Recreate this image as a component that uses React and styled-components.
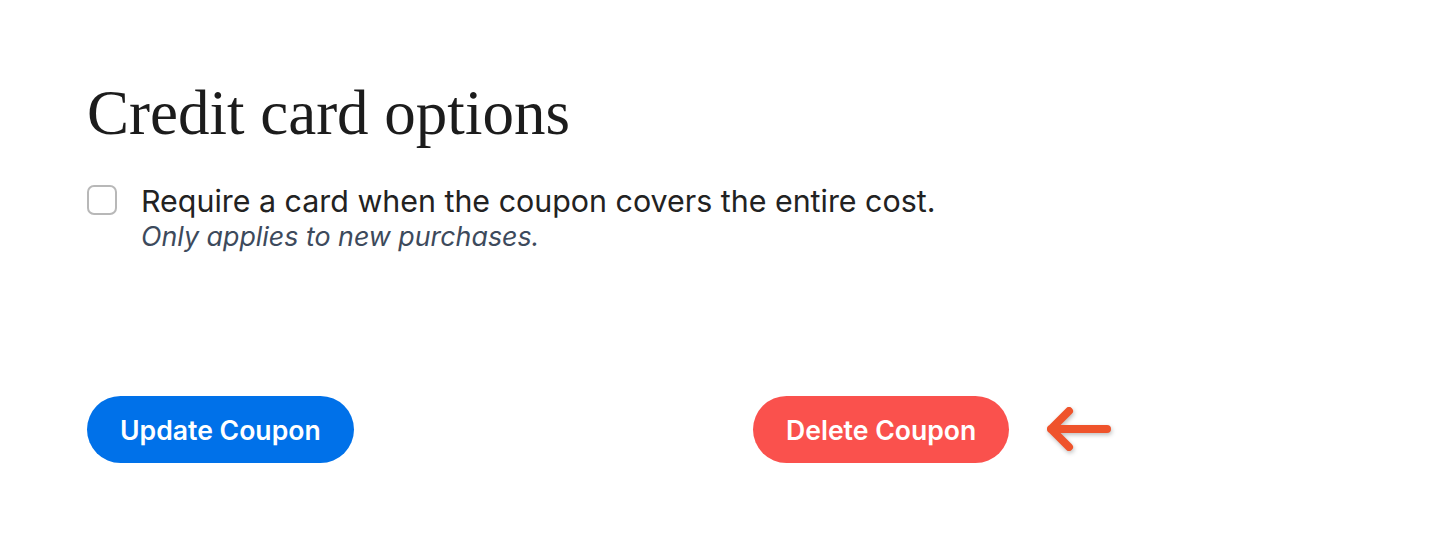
import React from 'react'
import styled, { createGlobalStyle } from 'styled-components'

const GlobalStyle = createGlobalStyle`
    html, body {
        margin: 0;
        padding: 0;
        background: #ffffff;
    }
    body {
        font-family: Inter, "Noto Sans", sans-serif;
        -webkit-font-smoothing: antialiased;
    }
`

const Page = styled.section`
    padding: 73px 87px 0 87px;
    height: 541px;
    box-sizing: border-box;
`

const Heading = styled.h2`
    margin: 0;
    font-family: "Liberation Serif", "DejaVu Serif", serif;
    font-weight: 400;
    font-size: 63px;
    line-height: 80px;
    color: #1c1c1c;
`

const OptionRow = styled.label`
    display: flex;
    align-items: flex-start;
    gap: 24px;
    margin-top: 30px;
    cursor: pointer;
`

const Box = styled.input`
    appearance: none;
    margin: 2px 0 0 0;
    flex: none;
    width: 30px;
    height: 30px;
    border: 2px solid #b8b8b8;
    border-radius: 7px;
    background: #fff;
    box-sizing: border-box;
`

const OptionText = styled.div`
    display: flex;
    flex-direction: column;
`

const Label = styled.span`
    font-size: 30.4px;
    line-height: 36px;
    color: #222222;
`

const Hint = styled.span`
    margin-top: 1px;
    font-size: 26.8px;
    line-height: 32px;
    font-style: italic;
    color: #3d4a5c;
`

const Actions = styled.div`
    display: grid;
    grid-template-columns: 666px auto;
    align-items: center;
    margin-top: 144px;
`

const DangerGroup = styled.div`
    display: flex;
    align-items: center;
    gap: 34px;
`

const Button = styled.button`
    height: 67px;
    padding: 0 33px;
    border: none;
    border-radius: 34px;
    font-family: Inter, "Noto Sans", sans-serif;
    font-size: 26.6px;
    font-weight: 600;
    color: #ffffff;
    background: ${props => (props.danger ? '#fa514d' : '#0071e9')};
    justify-self: start;
    cursor: pointer;
`

const Arrow = () => (
    <svg width="72" height="52" viewBox="0 0 72 52" style={{ filter: 'drop-shadow(1px 2px 2px rgba(0,0,0,0.25))' }}>
        <path
            d="M64 25 H8 M26 7 L8 25 L26 43"
            fill="none"
            stroke="#ef532b"
            strokeWidth="8"
            strokeLinecap="round"
            strokeLinejoin="round"
        />
    </svg>
)

export default function App() {
    return (
        <Page>
            <GlobalStyle />
            <Heading>Credit card options</Heading>
            <OptionRow>
                <Box type="checkbox" />
                <OptionText>
                    <Label>Require a card when the coupon covers the entire cost.</Label>
                    <Hint>Only applies to new purchases.</Hint>
                </OptionText>
            </OptionRow>
            <Actions>
                <Button>Update Coupon</Button>
                <DangerGroup>
                    <Button danger>Delete Coupon</Button>
                    <Arrow />
                </DangerGroup>
            </Actions>
        </Page>
    )
}
